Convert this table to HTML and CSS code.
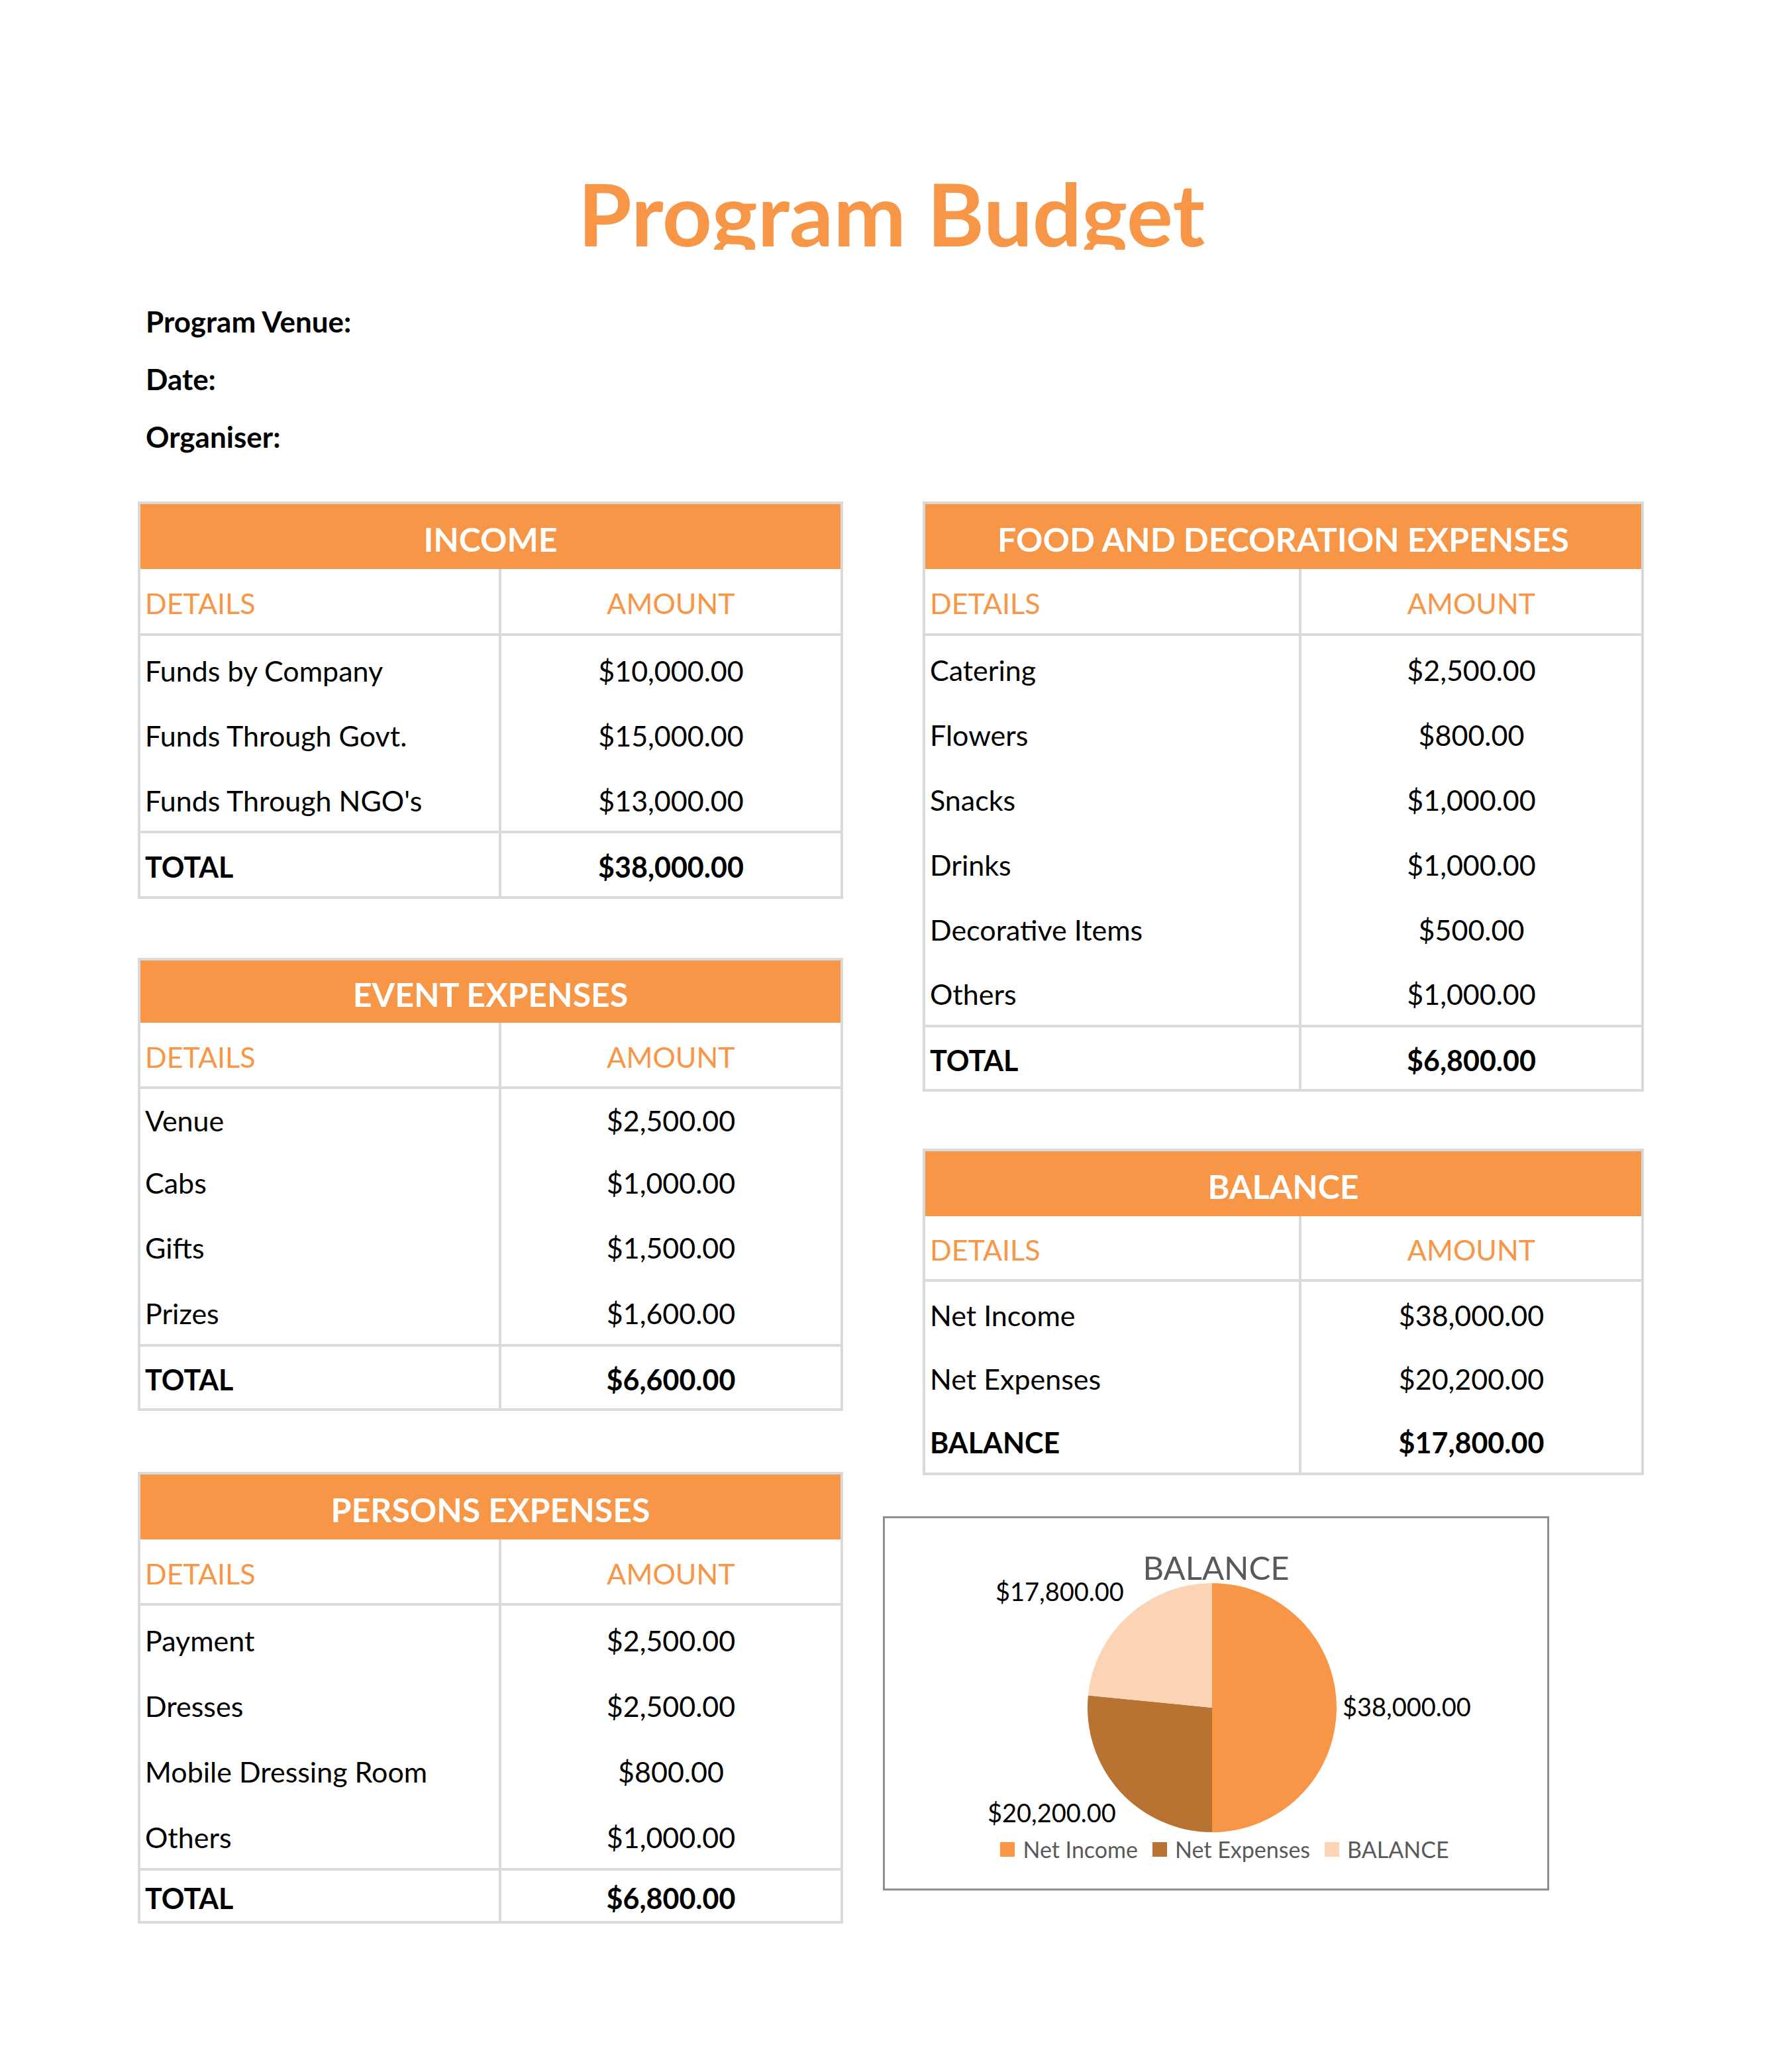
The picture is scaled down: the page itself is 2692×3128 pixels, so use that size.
FILE: index.html
```html
<!DOCTYPE html>
<html lang="en">
<head>
<meta charset="utf-8">
<title>Program Budget</title>
<link rel="stylesheet" href="styles.css">
</head>
<body>
<div class="page">
  <h1 class="title">Program Budget</h1>
  <div class="meta">
    <p>Program Venue:</p>
    <p>Date:</p>
    <p>Organiser:</p>
  </div>
  <div class="columns">
    <div class="col col-left">
      <section class="tbl tbl-l tbl-income">
        <div class="tbl-head">INCOME</div>
        <div class="row row-cols"><div class="c1">DETAILS</div><div class="c2">AMOUNT</div></div>
        <div class="row row-data"><div class="c1">Funds by Company</div><div class="c2">$10,000.00</div></div>
        <div class="row row-data"><div class="c1">Funds Through Govt.</div><div class="c2">$15,000.00</div></div>
        <div class="row row-data"><div class="c1">Funds Through NGO's</div><div class="c2">$13,000.00</div></div>
        <div class="row row-total"><div class="c1">TOTAL</div><div class="c2">$38,000.00</div></div>
      </section>
      <section class="tbl tbl-l tbl-event">
        <div class="tbl-head">EVENT EXPENSES</div>
        <div class="row row-cols"><div class="c1">DETAILS</div><div class="c2">AMOUNT</div></div>
        <div class="row row-data ev-1"><div class="c1">Venue</div><div class="c2">$2,500.00</div></div>
        <div class="row row-data ev-2"><div class="c1">Cabs</div><div class="c2">$1,000.00</div></div>
        <div class="row row-data ev-3"><div class="c1">Gifts</div><div class="c2">$1,500.00</div></div>
        <div class="row row-data ev-4"><div class="c1">Prizes</div><div class="c2">$1,600.00</div></div>
        <div class="row row-total"><div class="c1">TOTAL</div><div class="c2">$6,600.00</div></div>
      </section>
      <section class="tbl tbl-l tbl-persons">
        <div class="tbl-head">PERSONS EXPENSES</div>
        <div class="row row-cols"><div class="c1">DETAILS</div><div class="c2">AMOUNT</div></div>
        <div class="row row-data"><div class="c1">Payment</div><div class="c2">$2,500.00</div></div>
        <div class="row row-data"><div class="c1">Dresses</div><div class="c2">$2,500.00</div></div>
        <div class="row row-data"><div class="c1">Mobile Dressing Room</div><div class="c2">$800.00</div></div>
        <div class="row row-data"><div class="c1">Others</div><div class="c2">$1,000.00</div></div>
        <div class="row row-total"><div class="c1">TOTAL</div><div class="c2">$6,800.00</div></div>
      </section>
    </div>
    <div class="col col-right">
      <section class="tbl tbl-r tbl-food">
        <div class="tbl-head">FOOD AND DECORATION EXPENSES</div>
        <div class="row row-cols"><div class="c1">DETAILS</div><div class="c2">AMOUNT</div></div>
        <div class="row row-data"><div class="c1">Catering</div><div class="c2">$2,500.00</div></div>
        <div class="row row-data"><div class="c1">Flowers</div><div class="c2">$800.00</div></div>
        <div class="row row-data"><div class="c1">Snacks</div><div class="c2">$1,000.00</div></div>
        <div class="row row-data"><div class="c1">Drinks</div><div class="c2">$1,000.00</div></div>
        <div class="row row-data"><div class="c1">Decorative Items</div><div class="c2">$500.00</div></div>
        <div class="row row-data"><div class="c1">Others</div><div class="c2">$1,000.00</div></div>
        <div class="row row-total"><div class="c1">TOTAL</div><div class="c2">$6,800.00</div></div>
      </section>
      <section class="tbl tbl-r tbl-balance">
        <div class="tbl-head">BALANCE</div>
        <div class="row row-cols"><div class="c1">DETAILS</div><div class="c2">AMOUNT</div></div>
        <div class="row row-data"><div class="c1">Net Income</div><div class="c2">$38,000.00</div></div>
        <div class="row row-data"><div class="c1">Net Expenses</div><div class="c2">$20,200.00</div></div>
        <div class="row row-data row-bold"><div class="c1">BALANCE</div><div class="c2">$17,800.00</div></div>
      </section>
      <section class="chart">
        <div class="chart-title">BALANCE</div>
        <div class="plot">
          <svg class="pie" width="376" height="376" viewBox="0 0 376 376">
            <path class="s-income" d="M188 188 L188 0 A188 188 0 0 1 188 376 Z"/>
            <path class="s-exp" d="M188 188 L188 376 A188 188 0 0 1 0.9 169.4 Z"/>
            <path class="s-bal" d="M188 188 L0.9 169.4 A188 188 0 0 1 188 0 Z"/>
          </svg>
          <span class="dlabel dl-bal">$17,800.00</span>
          <span class="dlabel dl-inc">$38,000.00</span>
          <span class="dlabel dl-exp">$20,200.00</span>
        </div>
        <div class="legend">
          <span class="lg-item"><i class="sw sw-income"></i>Net Income</span>
          <span class="lg-item"><i class="sw sw-exp"></i>Net Expenses</span>
          <span class="lg-item"><i class="sw sw-bal"></i>BALANCE</span>
        </div>
      </section>
    </div>
  </div>
</div>
</body>
</html>
```

FILE: styles.css
```css
* { box-sizing: border-box; }
html, body { margin: 0; padding: 0; background: #ffffff; }
body {
  font-family: Lato, "Liberation Sans", sans-serif;
  color: #000000;
  width: 2692px;
  min-height: 3128px;
}
.page { width: 2692px; }

.title {
  margin: 243px 0 0 0;
  height: 134px;
  overflow: hidden;
  text-align: center;
  font-family: Lato, sans-serif;
  font-weight: 700;
  font-size: 131px;
  line-height: 157px;
  color: #F79646;
}

.meta {
  margin: 65px 0 0 0;
  padding-left: 220px;
}
.meta p {
  margin: 0;
  font-weight: 700;
  font-size: 44px;
  line-height: 87px;
}

.columns {
  margin: 54px 0 0 208px;
  display: grid;
  grid-template-columns: 1065px 1089px;
  column-gap: 120px;
  align-items: start;
}
.col { display: flex; flex-direction: column; }

.tbl {
  border: 4px solid #D9D9D9;
  background: #ffffff;
}
.tbl-head {
  background: #F79646;
  color: #ffffff;
  font-weight: 700;
  font-size: 50px;
  height: 98px;
  display: flex;
  align-items: center;
  justify-content: center;
  padding-top: 8px;
}
.row {
  display: grid;
  font-size: 43px;
}
.tbl-l .row { grid-template-columns: 541px 1fr; }
.tbl-r .row { grid-template-columns: 564px 1fr; }
.row .c1, .row .c2 {
  display: flex;
  align-items: center;
  padding-top: 6px;
}
.row .c1 { padding-left: 7px; }
.row .c2 {
  justify-content: center;
  border-left: 4px solid #D9D9D9;
}
.row-cols {
  height: 101px;
  border-bottom: 4px solid #D9D9D9;
  color: #F79646;
}
.row-data { height: 98px; }
.row-total {
  height: 99px;
  border-top: 4px solid #D9D9D9;
  font-weight: 700;
}
.row-bold { font-weight: 700; }

/* per-table geometry */
.tbl-income { margin-bottom: 89px; }
.tbl-event { margin-bottom: 92px; }
.tbl-event .tbl-head { height: 94px; }
.tbl-event .row-cols { height: 100px; }
.tbl-event .ev-1 { height: 89px; }
.tbl-event .ev-2 { height: 98px; }
.tbl-event .ev-3 { height: 99px; }
.tbl-event .ev-4 { height: 99px; }
.tbl-event .row-total { height: 97px; }
.tbl-persons .row-cols { height: 100px; }
.tbl-persons .row-data { height: 99px; }
.tbl-persons .row-total { height: 80px; }
.tbl-food { margin-bottom: 86px; }
.tbl-food .row-data { height: 97.8px; }
.tbl-food .row-total { height: 97px; }
.tbl-balance { margin-bottom: 62px; }
.tbl-balance .row-cols { height: 99px; }
.tbl-balance .row-data { height: 96px; }

/* chart */
.chart {
  width: 1006px;
  height: 565px;
  margin-left: -60px;
  border: 3px solid #8E8E8E;
  background: #ffffff;
  display: flex;
  flex-direction: column;
}
.chart-title {
  padding-top: 50px;
  text-align: center;
  font-size: 49px;
  line-height: 48px;
  color: #595959;
}
.plot {
  position: relative;
  height: 376px;
}
.pie {
  position: absolute;
  left: 306px;
  top: 0;
  display: block;
}
.s-income { fill: #F79646; }
.s-exp { fill: #B87333; }
.s-bal { fill: #FAD4B4; }
.dlabel {
  position: absolute;
  font-size: 38px;
  line-height: 40px;
  color: #000000;
  white-space: nowrap;
}
.dl-bal { left: 167px; top: -8px; }
.dl-inc { left: 691px; top: 166px; }
.dl-exp { left: 155px; top: 326px; }
.legend {
  margin-top: 4px;
  display: flex;
  justify-content: center;
  gap: 22px;
  padding-left: 26px;
  font-size: 34px;
  line-height: 44px;
  color: #595959;
}
.lg-item {
  display: flex;
  align-items: center;
  gap: 12px;
}
.sw {
  display: block;
  width: 22px;
  height: 22px;
}
.sw-income { background: #F79646; }
.sw-exp { background: #B87333; }
.sw-bal { background: #FAD4B4; }
```
